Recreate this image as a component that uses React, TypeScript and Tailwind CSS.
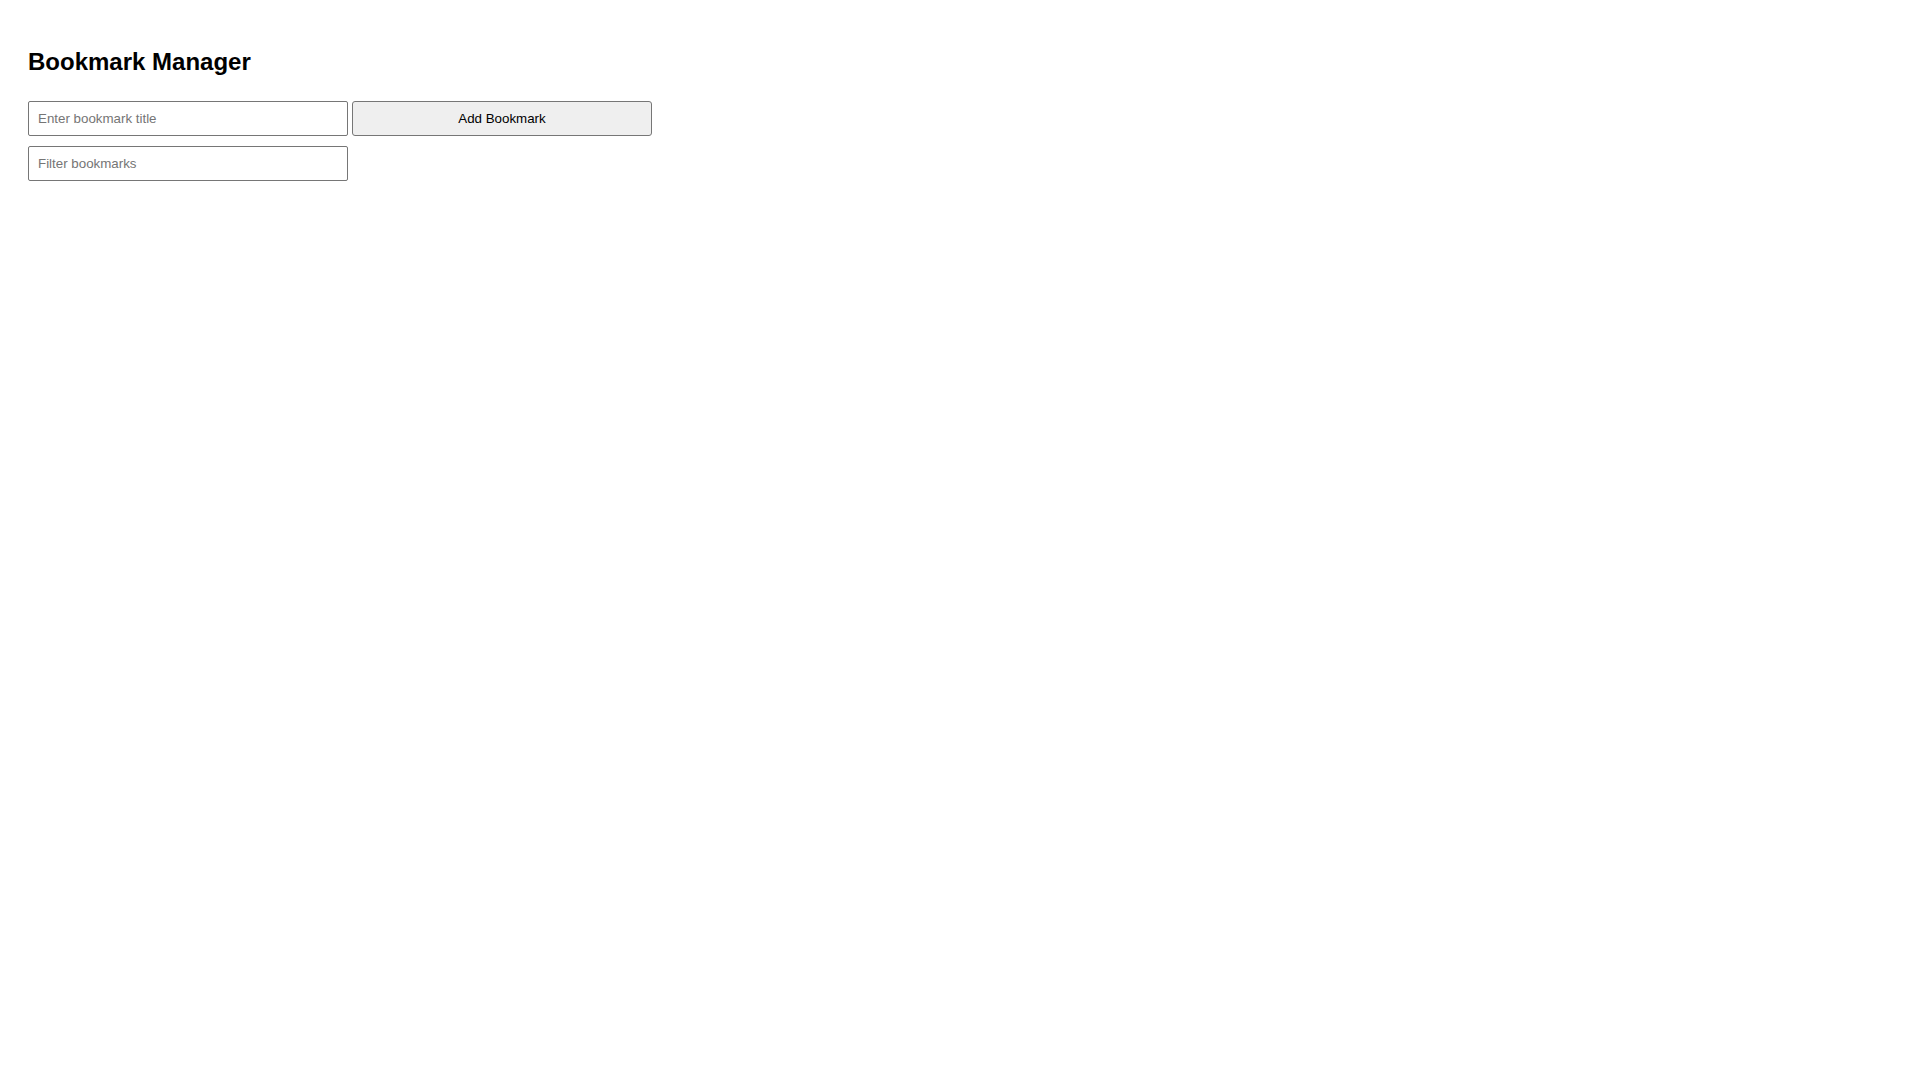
import React, { useState } from "react";

const App: React.FC = () => {
  const [title, setTitle] = useState("");
  const [filter, setFilter] = useState("");
  const [bookmarks, setBookmarks] = useState<string[]>([]);

  const handleAdd = () => {
    if (!title.trim()) return;
    setBookmarks([...bookmarks, title.trim()]);
    setTitle("");
  };

  const visible = bookmarks.filter((b) => b.toLowerCase().includes(filter.toLowerCase()));

  return (
    <div className="min-h-screen bg-white px-[28px] pt-[48px] text-black [font-family:'Liberation_Sans',Arial,sans-serif]">
      <h1 className="text-[24px] font-bold leading-[27px]">Bookmark Manager</h1>

      <div className="mt-[26px] flex gap-[4px]">
        <input
          type="text"
          value={title}
          onChange={(e) => setTitle(e.target.value)}
          placeholder="Enter bookmark title"
          className="h-[35px] w-[320px] rounded-[2px] border border-[#767676] px-[9px] text-[13.333px] placeholder:text-[#757575]"
        />
        <button
          onClick={handleAdd}
          className="h-[35px] w-[300px] rounded-[3px] border border-[#767676] bg-[#efefef] text-[13.333px] text-black"
        >
          Add Bookmark
        </button>
      </div>

      <div className="mt-[10px]">
        <input
          type="text"
          value={filter}
          onChange={(e) => setFilter(e.target.value)}
          placeholder="Filter bookmarks"
          className="h-[35px] w-[320px] rounded-[2px] border border-[#767676] px-[9px] text-[13.333px] placeholder:text-[#757575]"
        />
      </div>

      {visible.length > 0 && (
        <ul className="mt-[10px] text-[16px]">
          {visible.map((b, i) => (
            <li key={i}>{b}</li>
          ))}
        </ul>
      )}
    </div>
  );
};

export default App;
